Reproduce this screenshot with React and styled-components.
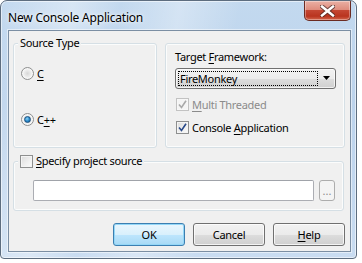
import React from "react";
import styled, { createGlobalStyle, css } from "styled-components";

const Global = createGlobalStyle`
  html, body { margin: 0; padding: 0; background: #ffffff; }
  body { font-family: "Noto Sans", "Open Sans", sans-serif; font-size: 11px; letter-spacing: -0.3px; color: #000; }
`;

const Window = styled.div`
  width: 357px;
  height: 259px;
  box-sizing: border-box;
  border: 1px solid #5d6d7f;
  border-radius: 7px 7px 4px 4px;
  background:
    linear-gradient(100deg, rgba(255,255,255,0) 0%, rgba(255,255,255,0.35) 18%, rgba(255,255,255,0) 30%, rgba(255,255,255,0.3) 45%, rgba(255,255,255,0) 60%),
    linear-gradient(180deg, #c3d9ef 0%, #bcd3ec 40%, #c9dcf1 100%);
  box-shadow: inset 0 0 0 1px rgba(255,255,255,0.55);
  display: flex;
  flex-direction: column;
  overflow: hidden;
`;

const TitleBar = styled.div`
  height: 29px;
  display: flex;
  align-items: flex-start;
  justify-content: space-between;
  padding-left: 7px;
  padding-right: 5px;
  box-sizing: border-box;
`;

const Title = styled.div`
  margin-top: 8px;
  font-size: 12px;
  color: #000;
  letter-spacing: -0.2px;
  text-shadow: 0 0 8px rgba(255,255,255,0.9), 0 0 3px rgba(255,255,255,0.9);
`;

const CloseButton = styled.div`
  width: 47px;
  height: 20px;
  box-sizing: border-box;
  border: 1px solid #6b2b22;
  border-top: none;
  border-radius: 0 0 5px 5px;
  background: linear-gradient(180deg, #eab0a4 0%, #df8d7e 45%, #c44632 50%, #b9341f 80%, #d3664d 100%);
  box-shadow: inset 0 0 0 1px rgba(255,255,255,0.35);
  display: flex;
  align-items: center;
  justify-content: center;
`;

const Client = styled.div`
  flex: 1;
  margin: 0 5px 6px 7px;
  border: 1px solid #7b8ea3;
  background: #f0f0f0;
  display: flex;
  flex-direction: column;
  padding: 12px 5px 5px 4px;
  box-shadow: 0 0 0 1px rgba(255,255,255,0.5);
`;

const TopRow = styled.div`
  display: flex;
  gap: 8px;
  height: 105px;
`;

const Group = styled.div`
  box-sizing: border-box;
  border: 1px solid #d5dfe5;
  border-radius: 3px;
  box-shadow: inset 0 0 0 1px #fbfcfc;
  width: ${(p) => p.$w}px;
  height: ${(p) => p.$h}px;
  margin-top: ${(p) => p.$mt || 0}px;
  display: flex;
  flex-direction: column;
`;

const Legend = styled.div`
  align-self: flex-start;
  margin: -9px 0 0 4px;
  padding: 0 2px;
  background: #f0f0f0;
  line-height: 16px;
  display: flex;
  align-items: center;
  gap: 3px;
`;

const U = styled.span`
  text-decoration: underline;
  text-underline-offset: 2px;
`;

const RadioRow = styled.div`
  display: flex;
  align-items: center;
  gap: 3px;
  height: 16px;
  margin-left: 7px;
  margin-top: ${(p) => p.$mt}px;
`;

const RadioCircle = styled.span`
  width: 13px;
  height: 13px;
  box-sizing: border-box;
  border-radius: 50%;
  border: 1px solid #8e8f8f;
  background: radial-gradient(circle at 50% 50%, #d8d8d8 0%, #f4f4f4 60%, #e8e8e8 100%);
  box-shadow: inset 0 0 0 1px #f7f7f7;
  display: flex;
  align-items: center;
  justify-content: center;
  ${(p) =>
    p.$on &&
    css`
      &::after {
        content: "";
        width: 5px;
        height: 5px;
        border-radius: 50%;
        border: 1px solid #1c5180;
        background: radial-gradient(circle at 40% 35%, #8fd3f5 0%, #2e8ecf 50%, #0d4f86 100%);
      }
    `}
`;

const FieldLabel = styled.div`
  line-height: 16px;
  margin: 5px 0 0 9px;
`;

const Combo = styled.div`
  margin: 3px 0 0 9px;
  width: 161px;
  height: 21px;
  box-sizing: border-box;
  border: 1px solid #707070;
  border-radius: 3px;
  background: linear-gradient(180deg, #f2f2f2 0%, #ebebeb 50%, #dddddd 51%, #cfcfcf 100%);
  box-shadow: inset 0 0 0 1px rgba(255,255,255,0.7);
  display: flex;
  align-items: center;
  padding: 0 4px 0 2px;
  gap: 5px;
`;

const ComboText = styled.div`
  flex: 1;
  height: 15px;
  line-height: 14px;
  border: 1px dotted #000;
  box-sizing: border-box;
  padding-left: 1px;
`;

const CheckRow = styled.div`
  display: flex;
  align-items: center;
  gap: 3px;
  height: 16px;
  margin-left: 10px;
  margin-top: ${(p) => p.$mt}px;
  color: ${(p) => (p.$disabled ? "#8b8b8b" : "#000")};
`;

const Box = styled.span`
  width: 13px;
  height: 13px;
  box-sizing: border-box;
  border: 1px solid ${(p) => (p.$disabled ? "#c2c2c2" : "#8e8f8f")};
  background: ${(p) =>
    p.$disabled
      ? "#f4f4f4"
      : "linear-gradient(135deg, #dcdcdc 0%, #f0f0f0 60%, #fbfbfb 100%)"};
  box-shadow: inset 0 0 0 1px ${(p) => (p.$disabled ? "#f7f7f7" : "#f4f4f4")};
  display: flex;
  align-items: center;
  justify-content: center;
  flex-shrink: 0;
`;

const EditRow = styled.div`
  display: flex;
  gap: 5px;
  margin: 11px 0 0 19px;
`;

const Edit = styled.div`
  width: 281px;
  height: 21px;
  box-sizing: border-box;
  background: #fff;
  border: 1px solid #abadb3;
  border-top-color: #a0a3a9;
  border-radius: 2px;
`;

const Dots = styled.div`
  width: 16px;
  height: 21px;
  box-sizing: border-box;
  border: 1px solid #adadad;
  border-radius: 3px;
  background: #f4f4f4;
  color: #8d8d8d;
  font-size: 11px;
  letter-spacing: 0;
  display: flex;
  align-items: flex-end;
  justify-content: center;
  line-height: 14px;
  padding-bottom: 2px;
`;

const ButtonRow = styled.div`
  display: flex;
  justify-content: flex-end;
  gap: 8px;
  margin-top: 12px;
`;

const Button = styled.div`
  width: 72px;
  height: 23px;
  box-sizing: border-box;
  border-radius: 3px;
  display: flex;
  align-items: center;
  justify-content: center;
  border: 1px solid ${(p) => (p.$default ? "#3c7fb1" : "#707070")};
  background: ${(p) =>
    p.$default
      ? "linear-gradient(180deg, #eaf6fd 0%, #d9f0fc 50%, #bee6fd 51%, #a7d9f5 100%)"
      : "linear-gradient(180deg, #f2f2f2 0%, #ebebeb 50%, #dddddd 51%, #cfcfcf 100%)"};
  box-shadow: inset 0 0 0 1px ${(p) => (p.$default ? "#94d7f7" : "rgba(255,255,255,0.75)")};
`;

const Check = ({ color }) => (
  <svg width="9" height="9" viewBox="0 0 9 9">
    <path d="M1 4.5 L3.5 7.5 L8 0.8" fill="none" stroke={color} strokeWidth="1.6" />
  </svg>
);

const CloseX = () => (
  <svg width="15" height="12" viewBox="0 0 15 12">
    <path
      d="M2 1.5 L13 10.5 M13 1.5 L2 10.5"
      stroke="#4a2a26"
      strokeWidth="4.4"
      strokeLinecap="square"
      opacity="0.75"
    />
    <path d="M2 1.5 L13 10.5 M13 1.5 L2 10.5" stroke="#fff" strokeWidth="2.4" strokeLinecap="square" />
  </svg>
);

const Arrow = () => (
  <svg width="8" height="5" viewBox="0 0 8 5">
    <path d="M0 0 H7 L3.5 4 Z" fill="#000" />
  </svg>
);

export default function App() {
  return (
    <>
      <Global />
      <Window>
        <TitleBar>
          <Title>New Console Application</Title>
          <CloseButton>
            <CloseX />
          </CloseButton>
        </TitleBar>
        <Client>
          <TopRow>
            <Group $w={144} $h={105}>
              <Legend>Source Type</Legend>
              <RadioRow $mt={14}>
                <RadioCircle />
                <U>C</U>
              </RadioRow>
              <RadioRow $mt={30}>
                <RadioCircle $on />
                <span>
                  C<U>+</U>+
                </span>
              </RadioRow>
            </Group>
            <Group $w={180} $h={105}>
              <FieldLabel>
                Target <U>F</U>ramework:
              </FieldLabel>
              <Combo>
                <ComboText>FireMonkey</ComboText>
                <Arrow />
              </Combo>
              <CheckRow $mt={7} $disabled>
                <Box $disabled>
                  <Check color="#a9a9a9" />
                </Box>
                <span>
                  <U>M</U>ulti Threaded
                </span>
              </CheckRow>
              <CheckRow $mt={7}>
                <Box>
                  <Check color="#2a4a8a" />
                </Box>
                <span>
                  Console <U>A</U>pplication
                </span>
              </CheckRow>
            </Group>
          </TopRow>
          <Group $w={331} $h={50} $mt={13}>
            <Legend>
              <Box />
              <span>
                <U>S</U>pecify project source
              </span>
            </Legend>
            <EditRow>
              <Edit />
              <Dots>...</Dots>
            </EditRow>
          </Group>
          <ButtonRow>
            <Button $default>OK</Button>
            <Button>Cancel</Button>
            <Button>
              <span>
                <U>H</U>elp
              </span>
            </Button>
          </ButtonRow>
        </Client>
      </Window>
    </>
  );
}
